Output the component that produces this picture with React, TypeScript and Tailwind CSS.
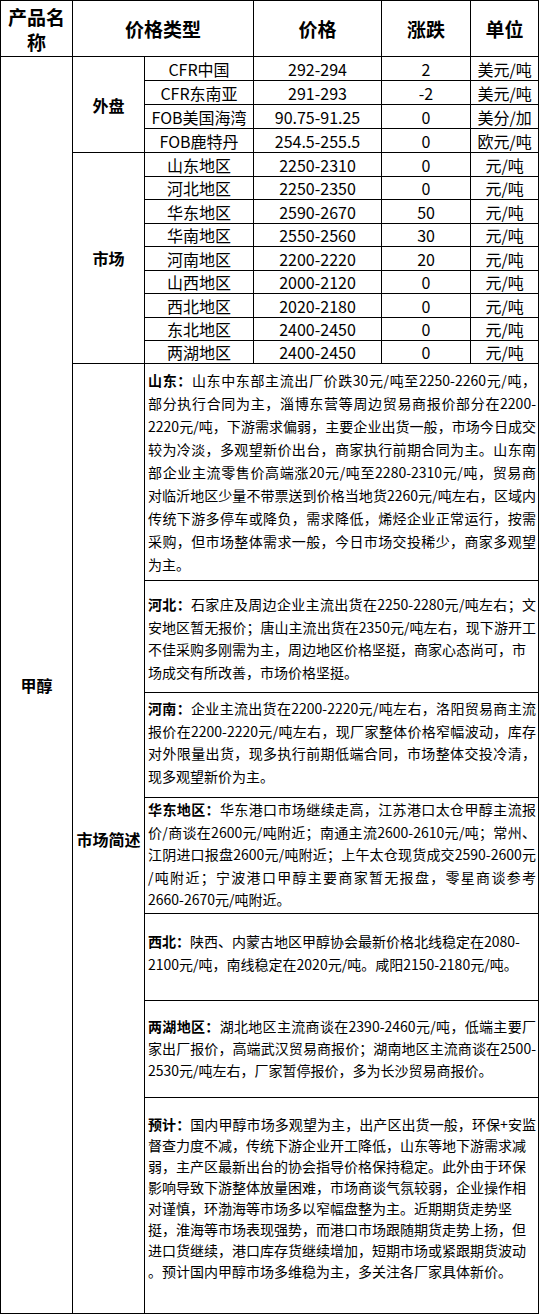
import React from 'react';

const overseas = [
  ['CFR中国', '292-294', '2', '美元/吨'],
  ['CFR东南亚', '291-293', '-2', '美元/吨'],
  ['FOB美国海湾', '90.75-91.25', '0', '美分/加'],
  ['FOB鹿特丹', '254.5-255.5', '0', '欧元/吨'],
];

const market = [
  ['山东地区', '2250-2310', '0', 'h-[24px]'],
  ['河北地区', '2250-2350', '0', 'h-[23px]'],
  ['华东地区', '2590-2670', '50', 'h-[24px]'],
  ['华南地区', '2550-2560', '30', 'h-[23px]'],
  ['河南地区', '2200-2220', '20', 'h-[24px]'],
  ['山西地区', '2000-2120', '0', 'h-[23px]'],
  ['西北地区', '2020-2180', '0', 'h-[24px]'],
  ['东北地区', '2400-2450', '0', 'h-[23px]'],
  ['两湖地区', '2400-2450', '0', 'h-[23px]'],
];

// each note: label, row height, top padding, line height, how many leading lines are justified
const notes = [
  {
    label: '山东：',
    h: 'h-[217px]',
    pt: 'pt-[5px]',
    lh: 'leading-[23px]',
    j: 8,
    lines: [
      '山东中东部主流出厂价跌30元/吨至2250-2260元/吨，',
      '部分执行合同为主，淄博东营等周边贸易商报价部分在2200-',
      '2220元/吨，下游需求偏弱，主要企业出货一般，市场今日成交',
      '较为冷淡，多观望新价出台，商家执行前期合同为主。山东南',
      '部企业主流零售价高端涨20元/吨至2280-2310元/吨，贸易商',
      '对临沂地区少量不带票送到价格当地货2260元/吨左右，区域内',
      '传统下游多停车或降负，需求降低，烯烃企业正常运行，按需',
      '采购，但市场整体需求一般，今日市场交投稀少，商家多观望',
      '为主。',
    ],
  },
  {
    label: '河北：',
    h: 'h-[112px]',
    pt: 'pt-[12px]',
    lh: 'leading-[22.5px]',
    j: 2,
    lines: [
      '石家庄及周边企业主流出货在2250-2280元/吨左右；文',
      '安地区暂无报价；唐山主流出货在2350元/吨左右，现下游开工',
      '不佳采购多刚需为主，周边地区价格坚挺，商家心态尚可，市',
      '场成交有所改善，市场价格坚挺。',
    ],
  },
  {
    label: '河南：',
    h: 'h-[105px]',
    pt: 'pt-[4px]',
    lh: 'leading-[22.5px]',
    j: 3,
    lines: [
      '企业主流出货在2200-2220元/吨左右，洛阳贸易商主流',
      '报价在2200-2220元/吨左右，现厂家整体价格窄幅波动，库存',
      '对外限量出货，现多执行前期低端合同，市场整体交投冷清，',
      '现多观望新价为主。',
    ],
  },
  {
    label: '华东地区：',
    h: 'h-[116px]',
    pt: 'pt-[0px]',
    lh: 'leading-[22.5px]',
    j: 4,
    lines: [
      '华东港口市场继续走高，江苏港口太仓甲醇主流报',
      '价/商谈在2600元/吨附近；南通主流2600-2610元/吨；常州、',
      '江阴进口报盘2600元/吨附近；上午太仓现货成交2590-2600元',
      '/吨附近；宁波港口甲醇主要商家暂无报盘，零星商谈参考',
      '2660-2670元/吨附近。',
    ],
  },
  {
    label: '西北：',
    h: 'h-[87px]',
    pt: 'pt-[16px]',
    lh: 'leading-[22.5px]',
    j: 0,
    lines: [
      '陕西、内蒙古地区甲醇协会最新价格北线稳定在2080-',
      '2100元/吨，南线稳定在2020元/吨。咸阳2150-2180元/吨。',
    ],
  },
  {
    label: '两湖地区：',
    h: 'h-[97px]',
    pt: 'pt-[14px]',
    lh: 'leading-[22px]',
    j: 2,
    lines: [
      '湖北地区主流商谈在2390-2460元/吨，低端主要厂',
      '家出厂报价，高端武汉贸易商报价；湖南地区主流商谈在2500-',
      '2530元/吨左右，厂家暂停报价，多为长沙贸易商报价。',
    ],
  },
  {
    label: '预计：',
    h: 'h-[216px]',
    pt: 'pt-[16px]',
    lh: 'leading-[21px]',
    j: 1,
    lines: [
      '国内甲醇市场多观望为主，出产区出货一般，环保+安监',
      '督查力度不减，传统下游企业开工降低，山东等地下游需求减',
      '弱，主产区最新出台的协会指导价格保持稳定。此外由于环保',
      '影响导致下游整体放量困难，市场商谈气氛较弱，企业操作相',
      '对谨慎，环渤海等市场多以窄幅盘整为主。近期期货走势坚',
      '挺，淮海等市场表现强势，而港口市场跟随期货走势上扬，但',
      '进口货继续，港口库存货继续增加，短期市场或紧跟期货波动',
      '。预计国内甲醇市场多维稳为主，多关注各厂家具体新价。',
    ],
  },
];

const cell = 'border border-black text-center';

export default function App() {
  return (
    <div className="w-[540px] bg-white text-black font-['Noto_Sans_CJK_SC','Noto_Sans',sans-serif]">
      <table className="table-fixed w-[538px] border-collapse border border-black">
        <colgroup>
          <col className="w-[72px]" />
          <col className="w-[72px]" />
          <col className="w-[109px]" />
          <col className="w-[128px]" />
          <col className="w-[89px]" />
          <col className="w-[68px]" />
        </colgroup>
        <tbody>
          {/* header */}
          <tr className="h-[56px] text-[19px] font-bold leading-[25px]">
            <td className={cell}>产品名称</td>
            <td className={cell} colSpan={2}>价格类型</td>
            <td className={cell}>价格</td>
            <td className={cell}>涨跌</td>
            <td className={cell}>单位</td>
          </tr>

          {/* 外盘 */}
          {overseas.map((row, i) => (
            <tr key={row[0]} className="h-[24px] text-[16px] leading-[22px]">
              {i === 0 && (
                <td className={`${cell} font-bold`} rowSpan={1 + overseas.length + market.length + notes.length - 1}>
                  甲醇
                </td>
              )}
              {i === 0 && (
                <td className={`${cell} font-bold`} rowSpan={overseas.length}>
                  外盘
                </td>
              )}
              <td className={`${cell} whitespace-nowrap`}>{row[0]}</td>
              <td className={cell}>{row[1]}</td>
              <td className={cell}>{row[2]}</td>
              <td className={`${cell} whitespace-nowrap`}>{row[3]}</td>
            </tr>
          ))}

          {/* 市场 */}
          {market.map((row, i) => (
            <tr key={row[0]} className={`${row[3]} text-[16px] leading-[22px]`}>
              {i === 0 && (
                <td className={`${cell} font-bold`} rowSpan={market.length}>
                  市场
                </td>
              )}
              <td className={cell}>{row[0]}</td>
              <td className={cell}>{row[1]}</td>
              <td className={cell}>{row[2]}</td>
              <td className={cell}>元/吨</td>
            </tr>
          ))}

          {/* 市场简述 */}
          {notes.map((note, i) => (
            <tr key={note.label} className={note.h}>
              {i === 0 && (
                <td className={`${cell} font-bold text-[16px] whitespace-nowrap`} rowSpan={notes.length}>
                  市场简述
                </td>
              )}
              <td colSpan={4} className={`border border-black align-top pl-[3px] pr-[2px] text-[14px] ${note.pt} ${note.lh}`}>
                {note.lines.map((line, k) => (
                  <div
                    key={k}
                    className={k < note.j ? 'whitespace-nowrap text-justify [text-align-last:justify]' : 'whitespace-nowrap'}
                  >
                    {k === 0 && <span className="font-bold">{note.label}</span>}
                    {line}
                  </div>
                ))}
              </td>
            </tr>
          ))}
        </tbody>
      </table>
    </div>
  );
}
